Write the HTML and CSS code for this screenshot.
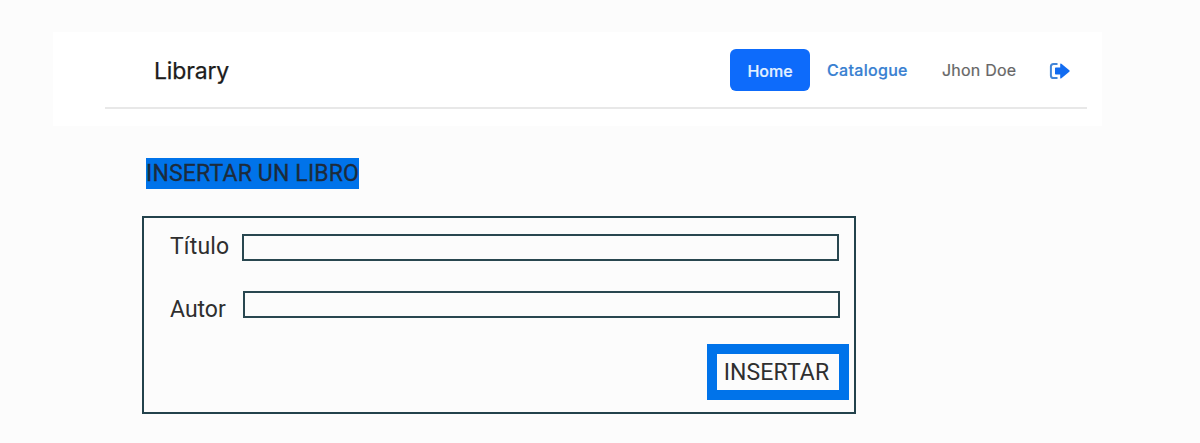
FILE: index.html
```html
<!DOCTYPE html>
<html lang="es">
<head>
<meta charset="utf-8">
<title>Library</title>
<link rel="stylesheet" href="styles.css">
</head>
<body>
<header class="topbar">
  <div class="topbar-inner">
    <span class="brand">Library</span>
    <nav class="nav">
      <a class="nav-home">Home</a>
      <a class="nav-catalogue">Catalogue</a>
      <span class="nav-user">Jhon Doe</span>
      <svg class="logout" width="22" height="18" viewBox="0 0 22 18">
        <path d="M8.5 1.9H4.6Q1.9 1.9 1.9 4.6V13.4Q1.9 16.1 4.6 16.1H8.5" fill="none" stroke="#4285d8" stroke-width="2"/>
        <path d="M6 6.2Q6 5.4 6.8 5.4H11.2V2.3Q11.2 .9 12.4 1.8L20.3 8.2Q21.2 9 20.3 9.8L12.4 16.2Q11.2 17.1 11.2 15.7V12.6H6.8Q6 12.6 6 11.8Z" fill="#126cf1"/>
      </svg>
    </nav>
  </div>
</header>
<main class="content">
  <h1 class="title">INSERTAR UN LIBRO</h1>
  <form class="form">
    <div class="row row-title">
      <label class="label label-title" for="titulo">Título</label>
      <input class="field" id="titulo" type="text">
    </div>
    <div class="row row-author">
      <label class="label label-author" for="autor">Autor</label>
      <input class="field" id="autor" type="text">
    </div>
    <button class="submit" type="button">INSERTAR</button>
  </form>
</main>
</body>
</html>
```
FILE: styles.css
```css
* { box-sizing: border-box; }
body {
  margin: 0;
  padding-top: 32px;
  height: 443px;
  overflow: hidden;
  background: #fcfcfc;
  font-family: Roboto, sans-serif;
  color: #2f2f2f;
}
.topbar {
  width: 1049px;
  height: 94px;
  margin-left: 53px;
  padding-left: 52px;
  background: #fff;
}
.topbar-inner {
  display: flex;
  justify-content: space-between;
  width: 982px;
  height: 77px;
  padding: 17px 16px 0 49px;
  border-bottom: 2px solid #e8e8e8;
}
.brand {
  font: 400 23px/45px Inter, sans-serif;
  letter-spacing: -0.15px;
  color: #1c1c1c;
  -webkit-text-stroke: 0.25px currentColor;
}
.nav {
  display: flex;
  height: 42px;
  align-items: center;
  font: 500 16px/44px Inter, sans-serif;
}
.nav-home {
  width: 80px;
  height: 42px;
  border-radius: 6px;
  background: #0d6bfb;
  color: #e3f1ff;
  text-align: center;
  -webkit-text-stroke: 0.2px currentColor;
}
.nav-catalogue {
  width: 81px;
  margin-left: 17px;
  color: #387fd1;
  letter-spacing: 0.3px;
  -webkit-text-stroke: 0.2px currentColor;
}
.nav-user {
  width: 75px;
  margin-left: 34px;
  color: #666;
  font-weight: 400;
  letter-spacing: 0.2px;
  -webkit-text-stroke: 0.2px currentColor;
}
.logout { margin: 2px 0 0 32px; }
.content { padding: 32px 0 0 142px; }
.title {
  width: 213px;
  height: 31px;
  margin: 0 0 27px 4px;
  background: #0073ea;
  color: #1d2b3b;
  font-size: 23px;
  font-weight: 400;
  line-height: 31px;
  letter-spacing: 0.16px;
  white-space: nowrap;
  -webkit-text-stroke: 0.3px currentColor;
}
.form {
  display: flex;
  flex-direction: column;
  width: 714px;
  height: 198px;
  padding: 16px 5px 0 26px;
  border: 2px solid #23424c;
}
.row { display: flex; height: 27px; }
.row-author { margin-top: 30px; }
.label { height: 27px; font-size: 23px; line-height: 25px; white-space: nowrap; }
.label-title { width: 72px; letter-spacing: 0.15px; }
.label-author { width: 73px; line-height: 37px; }
.field {
  width: 597px;
  height: 27px;
  padding: 0 6px;
  border: 2px solid #294750;
  border-radius: 0;
  outline: 0;
  background: transparent;
  font: 16px Roboto, sans-serif;
}
.submit {
  align-self: flex-end;
  width: 142px;
  height: 56px;
  margin-top: 26px;
  padding: 1px 3px 0 0;
  border: 10px solid #0073ea;
  background: #fcfcfc;
  color: #2f2f2f;
  font: 23px/35px Roboto, sans-serif;
  letter-spacing: 0.1px;
}
```
